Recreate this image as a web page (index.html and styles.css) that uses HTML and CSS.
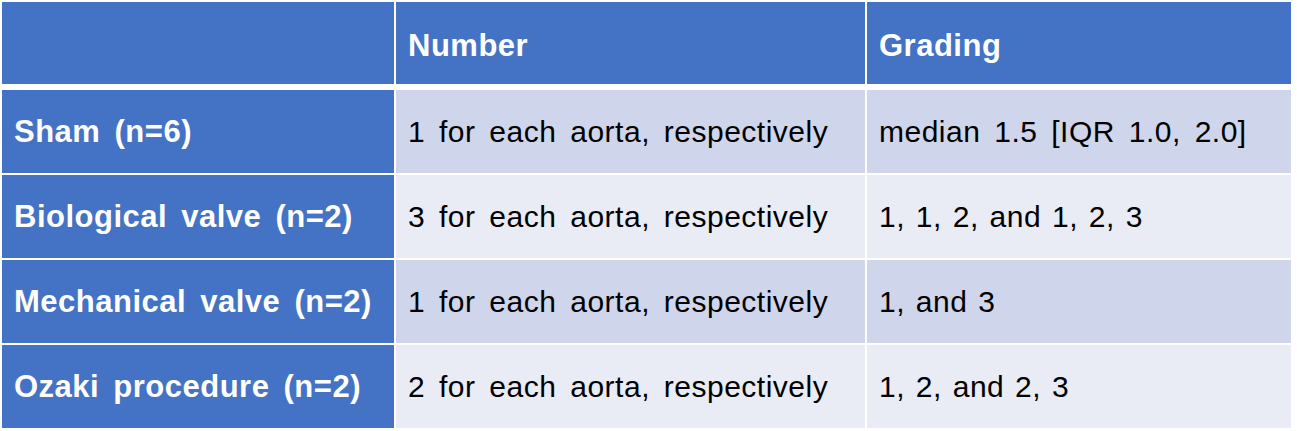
FILE: index.html
```html
<!DOCTYPE html>
<html>
<head>
<meta charset="utf-8">
<link rel="stylesheet" href="styles.css">
</head>
<body>
<div class="table">
  <div class="row head">
    <div class="cell stub"></div>
    <div class="cell hd">Number</div>
    <div class="cell hd">Grading</div>
  </div>
  <div class="row odd">
    <div class="cell stub">Sham (n=6)</div>
    <div class="cell">1 for each aorta, respectively</div>
    <div class="cell grade wide">median 1.5 [IQR 1.0, 2.0]</div>
  </div>
  <div class="row even">
    <div class="cell stub">Biological valve (n=2)</div>
    <div class="cell">3 for each aorta, respectively</div>
    <div class="cell grade">1, 1, 2, and 1, 2, 3</div>
  </div>
  <div class="row odd">
    <div class="cell stub">Mechanical valve (n=2)</div>
    <div class="cell">1 for each aorta, respectively</div>
    <div class="cell grade">1, and 3</div>
  </div>
  <div class="row even">
    <div class="cell stub">Ozaki procedure (n=2)</div>
    <div class="cell">2 for each aorta, respectively</div>
    <div class="cell grade">1, 2, and 2, 3</div>
  </div>
</div>
</body>
</html>
```

FILE: styles.css
```css
html, body {
  margin: 0;
  padding: 0;
  background: #ffffff;
}
body {
  font-family: "Liberation Sans", Arial, sans-serif;
}
.table {
  display: flex;
  flex-direction: column;
  gap: 2px;
  padding: 2px 0 0 2px;
  width: 1289px;
}
.row {
  display: grid;
  grid-template-columns: 392px 469px 424px;
  column-gap: 2px;
  height: 83px;
}
.row.head {
  height: 82px;
  margin-bottom: 4px;
}
.cell {
  display: flex;
  align-items: center;
  padding: 0 0 0 12px;
  font-size: 30px;
  letter-spacing: 0.5px;
  word-spacing: 5px;
  color: #000000;
  white-space: nowrap;
}
.cell.grade {
  word-spacing: 2px;
}
.cell.grade.wide {
  word-spacing: 5px;
}
.head .cell {
  background: #4472c4;
  padding-top: 6px;
}
.odd .cell {
  background: #cfd5ea;
}
.even .cell {
  background: #e9ebf5;
}
.row .cell.stub {
  background: #4472c4;
  color: #ffffff;
  font-weight: bold;
  font-size: 31px;
  word-spacing: 5px;
}
.row .cell.hd {
  color: #ffffff;
  font-weight: bold;
  font-size: 31px;
}
```
